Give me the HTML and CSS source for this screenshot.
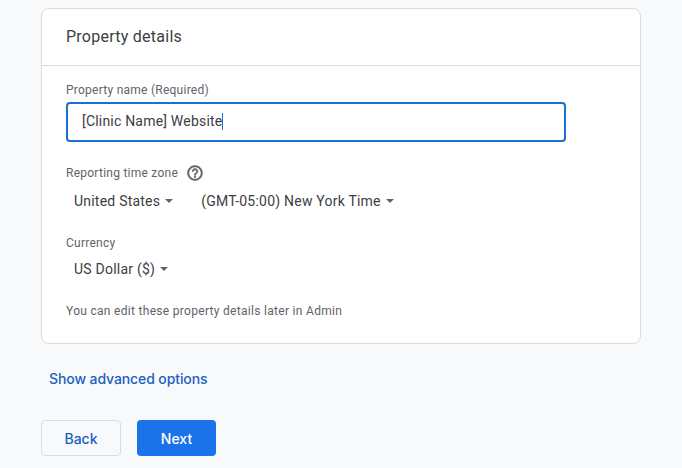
FILE: index.html
```html
<!DOCTYPE html>
<html lang="en-US">
    <head>
        <meta charset="utf-8">
        <title>Property details</title>

        <link rel="stylesheet" href="styles.css">
    </head>
    <body>
        <div class="card">
            <h2 class="cardTitle">Property details</h2>
            <div class="cardBody">
                <label class="fieldLabel nameLabel">Property name (Required)</label>
                <div class="nameInput"><span>[Clinic Name] Website</span><i class="caret"></i></div>

                <div class="fieldLabel zoneLabel">
                    Reporting time zone
                    <svg class="help" viewBox="0 0 24 24" width="18" height="18">
                        <path fill="#5f6368" stroke="#5f6368" stroke-width=".6" d="M11 18h2v-2h-2v2zm1-16C6.48 2 2 6.48 2 12s4.48 10 10 10 10-4.48 10-10S17.52 2 12 2zm0 18c-4.41 0-8-3.59-8-8s3.59-8 8-8 8 3.59 8 8-3.59 8-8 8zm0-14c-2.21 0-4 1.79-4 4h2c0-1.1.9-2 2-2s2 .9 2 2c0 2-3 1.75-3 5h2c0-2.25 3-2.5 3-5 0-2.21-1.79-4-4-4z"/>
                    </svg>
                </div>
                <div class="selects">
                    <div class="select country">United States<i class="arrow"></i></div>
                    <div class="select">(GMT-05:00) New York Time<i class="arrow"></i></div>
                </div>

                <div class="fieldLabel currencyLabel">Currency</div>
                <div class="selects">
                    <div class="select">US Dollar ($)<i class="arrow"></i></div>
                </div>

                <p class="note">You can edit these property details later in Admin</p>
            </div>
        </div>

        <a class="advanced" href="#">Show advanced options</a>

        <div class="actions">
            <button class="btn back" type="button">Back</button>
            <button class="btn next" type="button">Next</button>
        </div>
    </body>
</html>
```

FILE: styles.css
```css
body {
    margin: 0;
    height: 468px;
    overflow: hidden;
    padding: 8px 0 0 41px;
    box-sizing: border-box;
    background-color: #f8f9fb;
    font-family: Roboto, "Liberation Sans", sans-serif;
    color: #3c4043;
}

.card {
    width: 600px;
    height: 336px;
    box-sizing: border-box;
    background-color: #fff;
    border: 1px solid #dadce0;
    border-radius: 8px;
}

.cardTitle {
    margin: 0;
    height: 57px;
    padding-left: 24px;
    line-height: 55px;
    box-sizing: border-box;
    font-size: 16px;
    font-weight: 400;
    letter-spacing: .25px;
    border-bottom: 1px solid #dadce0;
}

.cardBody {
    padding: 0 24px;
}

.fieldLabel {
    display: block;
    font-size: 12px;
    line-height: 16px;
    letter-spacing: .25px;
    color: #5f6368;
}

.nameLabel {
    padding-top: 16px;
}

.nameInput {
    margin-top: 4px;
    width: 500px;
    height: 40px;
    box-sizing: border-box;
    padding-left: 14px;
    line-height: 35px;
    font-size: 14px;
    letter-spacing: .2px;
    border: 2px solid #1a6fd4;
    border-radius: 4px;
}

.caret {
    display: inline-block;
    width: 1px;
    height: 17px;
    vertical-align: -4px;
    background-color: #1a6fd4;
}

.zoneLabel {
    margin-top: 21px;
    display: flex;
    align-items: center;
    height: 20px;
}

.help {
    margin-left: 8px;
}

.selects {
    display: flex;
    height: 36px;
    align-items: center;
    padding-left: 8px;
    font-size: 14px;
}

.select {
    display: flex;
    align-items: center;
    letter-spacing: .22px;
}

.country {
    margin-right: 28px;
}

.arrow {
    width: 0;
    height: 0;
    margin-left: 5px;
    border-left: 4px solid transparent;
    border-right: 4px solid transparent;
    border-top: 4px solid #5f6368;
}

.currencyLabel {
    margin-top: 16px;
}

.note {
    margin: 16px 0 0;
    font-size: 12px;
    line-height: 16px;
    letter-spacing: .3px;
    color: #5f6368;
}

.advanced {
    display: block;
    margin: 26px 0 0 8px;
    font-size: 14px;
    line-height: 18px;
    font-weight: 500;
    letter-spacing: -.1px;
    font-family: Inter, Roboto, sans-serif;
    color: #1a5fc0;
    text-decoration: none;
}

.actions {
    display: flex;
    gap: 16px;
    margin-top: 32px;
}

.btn {
    width: 80px;
    height: 36px;
    border-radius: 4px;
    font-family: Inter, Roboto, sans-serif;
    font-size: 14px;
    font-weight: 500;
}

.back {
    background-color: transparent;
    border: 1px solid #dadce0;
    color: #1a5fc0;
}

.next {
    width: 79px;
    background-color: #1a73e8;
    border: none;
    color: #fff;
}
```
